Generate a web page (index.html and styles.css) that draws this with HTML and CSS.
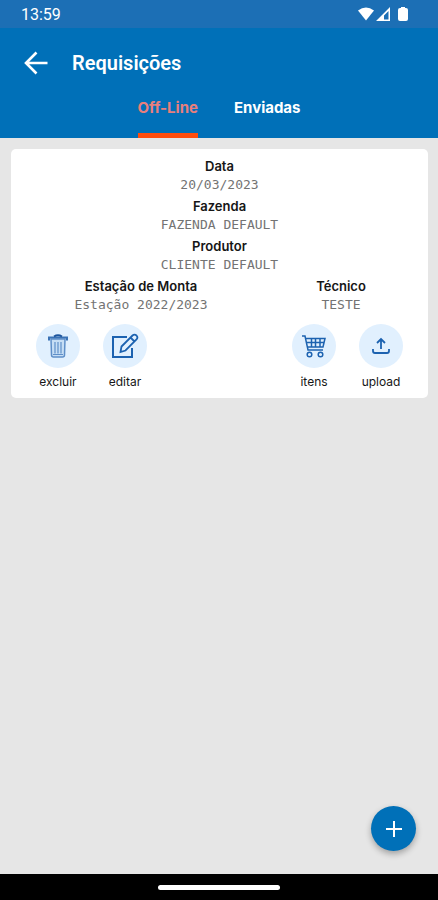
FILE: index.html
```html
<!DOCTYPE html>
<html lang="pt-BR">
	<head>
		<meta charset="utf-8">
		<meta name="viewport" content="width=device-width, initial-scale=1">
		<title>Requisições</title>
		<link rel="stylesheet" href="styles.css">
	</head>
	<body>
		<div class="status-bar">
			<span class="clock">13:59</span>
			<svg class="status-icons" width="50" height="16" viewBox="0 0 50 16" fill="#fff">
				<path d="M0 4.500Q8 -1.500 16 4.500L8 14.500Z"/>
				<path fill-rule="evenodd" d="M32 1V15H18ZM30.500 5L26 9.500V13.500H30.500Z"/>
				<path d="M42 2H43V1H47V2H48Q50 2 50 4V13Q50 15 48 15H42Q40 15 40 13V4Q40 2 42 2Z"/>
			</svg>
		</div>
		<header class="header">
			<div class="title-bar">
				<button class="back" aria-label="Voltar">
					<svg width="24" height="24" viewBox="0 0 24 24" fill="none" stroke="#fff" stroke-width="2.600">
						<path d="M23.500 12H3M12.500 1.500L2 12L12.500 22.500"/>
					</svg>
				</button>
				<h1 class="title">Requisições</h1>
			</div>
			<nav class="tabs">
				<button class="tab active">Off-Line</button>
				<button class="tab">Enviadas</button>
			</nav>
		</header>
		<main class="content">
			<article class="card">
				<dl class="fields">
					<div class="field"><dt>Data</dt><dd>20/03/2023</dd></div>
					<div class="field"><dt>Fazenda</dt><dd>FAZENDA DEFAULT</dd></div>
					<div class="field"><dt>Produtor</dt><dd>CLIENTE DEFAULT</dd></div>
				</dl>
				<dl class="fields split">
					<div class="field"><dt>Estação de Monta</dt><dd>Estação 2022/2023</dd></div>
					<div class="field"><dt>Técnico</dt><dd>TESTE</dd></div>
				</dl>
				<div class="actions">
					<button class="action">
						<span class="circle">
							<svg width="22" height="26" viewBox="0 0 22 26" fill="none" stroke="#5f8fc8">
								<path fill="#c6def5" stroke-width="1.500" d="M4 6L4.500 22Q4.500 24 6.500 24H15.500Q17.500 24 17.500 22L18 6Z"/>
								<path stroke-width="1.200" d="M8 9V20.500M11 9V20.500M14 9V20.500M6 21.500H16"/>
								<path stroke="#3a72b5" stroke-width="2" d="M2 7.500V4.500H20V7.500"/>
								<path stroke="#1c549c" stroke-width="2" d="M7 3.500Q11 1 15 3.500"/>
							</svg>
						</span>
						<span class="label">excluir</span>
					</button>
					<button class="action">
						<span class="circle">
							<svg width="28" height="26" viewBox="0 0 28 26" fill="none" stroke="#1c62b0" stroke-width="2">
								<path d="M16 4H2V24H21V15"/>
								<path stroke-width="1.800" d="M9.500 19L10.500 13.500L21.500 2.500Q23.500 0.800 25.500 2.500Q27.300 4.500 25.500 6.500L14.500 17.500ZM19.500 4.500L23.500 8.500"/>
							</svg>
						</span>
						<span class="label">editar</span>
					</button>
					<button class="action push">
						<span class="circle">
							<svg width="24" height="24" viewBox="0 0 24 24" fill="none" stroke="#1c62b0" stroke-width="1.500">
								<path d="M0 2H3L6 16H21M4 4.500H23L21 13H5.500M5 8.500H22M9.500 4.500V13M13.500 4.500V13M18 4.500V13"/>
								<circle cx="7.500" cy="20.500" r="2.300"/>
								<circle cx="18.500" cy="20.500" r="2.300"/>
							</svg>
						</span>
						<span class="label">itens</span>
					</button>
					<button class="action">
						<span class="circle">
							<svg width="20" height="20" viewBox="0 0 20 20" fill="none" stroke="#1c62b0" stroke-width="1.800">
								<path d="M2 13V15Q2 17 4 17H16Q18 17 18 15V13M10 13V4M6 7L10 3L14 7"/>
							</svg>
						</span>
						<span class="label">upload</span>
					</button>
				</div>
			</article>
			<button class="fab" aria-label="Adicionar">
				<svg width="16" height="16" viewBox="0 0 16 16" stroke="#fff" stroke-width="2">
					<path d="M8 0V16M0 8H16"/>
				</svg>
			</button>
		</main>
		<footer class="system-nav">
			<span class="handle"></span>
		</footer>
	</body>
</html>
```

FILE: styles.css
```css
* {
	box-sizing: border-box;
}
body {
	margin: 0;
	min-height: 100vh;
	display: flex;
	flex-direction: column;
	background-color: #e6e6e6;
	font-family: Inter, "Open Sans", sans-serif;
}
button {
	padding: 0;
	border: none;
	background: none;
	font-family: inherit;
	cursor: pointer;
}
svg {
	display: block;
}
.status-bar {
	display: flex;
	align-items: center;
	justify-content: space-between;
	height: 28px;
	padding: 0 30px 0 21px;
	background-color: #1c6fb5;
	color: #fff;
}
.clock {
	font-family: Roboto, sans-serif;
	font-size: 16px;
}
.header {
	background-color: #0070b8;
	color: #fff;
}
.title-bar {
	display: flex;
	align-items: center;
	gap: 24px;
	height: 70px;
	padding: 0 24px;
}
.title {
	margin: 0;
	font-family: Roboto, sans-serif;
	font-size: 20px;
	font-weight: 600;
}
.tabs {
	display: flex;
	justify-content: center;
	gap: 36px;
}
.tab {
	height: 40px;
	padding-bottom: 16px;
	border-bottom: 5px solid transparent;
	color: #fff;
	font-size: 15px;
	font-weight: 700;
}
.tab.active {
	border-color: #ff4d0d;
	color: #e87f7c;
}
.content {
	display: flex;
	flex: 1;
	flex-direction: column;
	justify-content: space-between;
	padding: 11px 10px 23px 11px;
}
.card {
	padding: 8px 0;
	border-radius: 5px;
	background-color: #fff;
}
.fields {
	margin: 0;
}
.split {
	display: grid;
	grid-template-columns: 13fr 7fr;
	padding-right: 17px;
}
.field {
	height: 40px;
	text-align: center;
}
dt {
	color: #161616;
	font-size: 13px;
	font-weight: 600;
	line-height: 19px;
}
dd {
	margin: 0;
	color: #737373;
	font-family: "DejaVu Sans Mono", monospace;
	font-size: 13px;
	line-height: 17px;
}
.actions {
	display: flex;
	gap: 23px;
	padding: 7px 25px 0;
}
.action {
	display: flex;
	flex-direction: column;
	align-items: center;
	gap: 6px;
	width: 44px;
}
.push {
	margin-left: auto;
}
.circle {
	display: flex;
	align-items: center;
	justify-content: center;
	width: 44px;
	height: 44px;
	border-radius: 50%;
	background-color: #e1f0fe;
}
.label {
	color: #161616;
	font-size: 12px;
	line-height: 16px;
}
.fab {
	display: flex;
	align-items: center;
	justify-content: center;
	align-self: flex-end;
	width: 45px;
	height: 45px;
	margin-right: 12px;
	border-radius: 50%;
	background-color: #0070b8;
	box-shadow: 0 3px 6px rgba(0, 0, 0, 0.3);
}
.system-nav {
	display: flex;
	align-items: center;
	justify-content: center;
	height: 26px;
	background-color: #000;
}
.handle {
	width: 122px;
	height: 5px;
	border-radius: 3px;
	background-color: #fff;
}
```
